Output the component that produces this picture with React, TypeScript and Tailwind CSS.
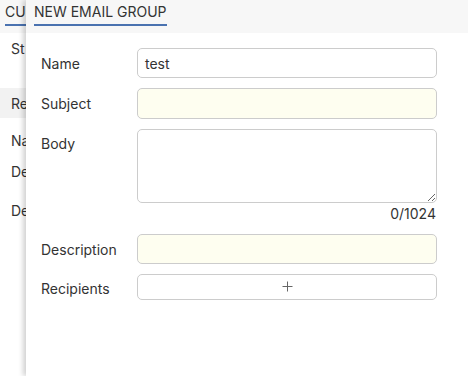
import React from "react";

const font = { fontFamily: "Inter, 'Noto Sans', sans-serif" };

function Row({ label, children, top = false }: { label: string; children: React.ReactNode; top?: boolean }) {
  return (
    <div className="flex">
      <div className={`w-[96px] shrink-0 text-[14px] text-[#333] ${top ? "pt-[4px]" : "flex h-[30px] items-center"}`}>{label}</div>
      <div className="w-[300px]">{children}</div>
    </div>
  );
}

export default function App() {
  return (
    <div className="relative h-[376px] w-[468px] overflow-hidden bg-white" style={font}>
      {/* underlying page (only its left strip is visible) */}
      <div className="w-[26px] overflow-hidden whitespace-nowrap">
        <div className="flex h-[33px] items-start bg-[#f7f7f7] pl-[5px]">
          <div className="border-b-2 border-[#4a72b0] pt-[2px] pb-[2px] text-[14px] leading-[20px] text-[#333]">CU</div>
        </div>
        <div className="flex flex-col text-[14px] text-[#333]">
          <div className="flex h-[30px] items-center pl-[11px]">St</div>
          <div className="h-[25px]" />
          <div className="flex h-[30px] items-center bg-[#f2f2f2] pl-[11px]">Re</div>
          <div className="h-[7px]" />
          <div className="flex h-[30px] items-center pl-[11px]">Na</div>
          <div className="flex h-[32px] items-center pl-[11px]">De</div>
          <div className="flex h-[46px] items-center pl-[11px]">De</div>
        </div>
      </div>

      {/* drawer */}
      <div className="absolute top-0 right-0 bottom-0 left-[26px] bg-white shadow-[-3px_0_5px_rgba(0,0,0,0.18)]">
        <div className="flex h-[33px] items-start bg-[#f7f7f7] pl-[8px]">
          <div className="border-b-2 border-[#4a72b0] pt-[2px] pb-[2px] text-[14px] leading-[20px] text-[#333]">NEW EMAIL GROUP</div>
        </div>
        <div className="flex flex-col pl-[15px] pt-[15px]">
          <Row label="Name">
            <div className="flex h-[30px] items-center rounded-[5px] border border-[#cccccc] bg-white px-[7px] text-[14px] text-[#333]">test</div>
          </Row>
          <div className="h-[10px]" />
          <Row label="Subject">
            <div className="h-[31px] rounded-[5px] border border-[#cccccc] bg-[#fefef0]" />
          </Row>
          <div className="h-[10px]" />
          <Row label="Body" top>
            <textarea className="block h-[74px] w-[300px] resize-y rounded-[5px] border border-[#cccccc] bg-white outline-none" />
            <div className="pr-[1px] text-right text-[14px] leading-[21px] text-[#333]">0/1024</div>
          </Row>
          <div className="h-[10px]" />
          <Row label="Description">
            <div className="h-[30px] rounded-[5px] border border-[#cccccc] bg-[#fefef0]" />
          </Row>
          <div className="h-[10px]" />
          <div className="flex">
            <div className="flex h-[26px] w-[96px] shrink-0 items-center pt-[3px] text-[14px] text-[#333]">Recipients</div>
            <div className="flex h-[26px] w-[300px] items-center justify-center rounded-[5px] border border-[#cccccc] bg-white">
              <svg width="11" height="11" viewBox="0 0 11 11" className="mb-[2px]">
                <path d="M5.5 0.5v10M0.5 5.5h10" stroke="#666" strokeWidth="1" fill="none" />
              </svg>
            </div>
          </div>
        </div>
      </div>
    </div>
  );
}
